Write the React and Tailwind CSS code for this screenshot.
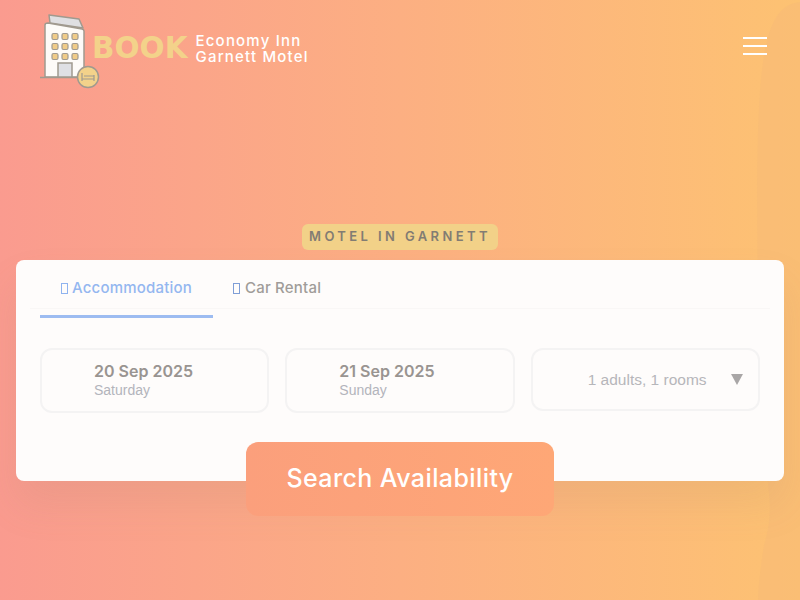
function Logo() {
  return (
    <svg width="62" height="76" viewBox="0 0 62 76" className="shrink-0">
      <path d="M9 1 L39 5 L43 14 L10 9 Z" fill="#dfdfe2" stroke="#a09a8f" strokeWidth="1.500" strokeLinejoin="round" />
      <path d="M5 11 Q5 9 8 9 L42 15 Q44 15.500 44 17 L44 63 L5 63 Z" fill="#fdfbf8" stroke="#a09a8f" strokeWidth="1.500" strokeLinejoin="round" />
      <path d="M0 63.500 H38" stroke="#a09a8f" strokeWidth="1.500" />
      {[19.5, 29.5, 39.5].map((y) =>
        [12, 22, 32].map((x) => (
          <rect key={`${x}-${y}`} x={x} y={y} width="6" height="6" rx="1.500" fill="#efcb88" stroke="#a09a8f" strokeWidth="1.200" />
        ))
      )}
      <rect x="18" y="49" width="14" height="14" fill="#dfe0e4" stroke="#a09a8f" strokeWidth="1.500" />
      <circle cx="48" cy="63" r="10.500" fill="#f3d28a" stroke="#a09a8f" strokeWidth="1.500" />
      <path d="M42 59 V67 M54 61 V67 M42 65 H54 M44 62 H54" stroke="#a09a8f" strokeWidth="1.200" fill="none" />
    </svg>
  );
}

function DateBox({ date, day }) {
  return (
    <div className="h-[65px] border-2 border-[#f4f3f3] rounded-xl pl-[52px] pt-[10px]">
      <div className="font-['Inter',sans-serif] font-semibold text-[16px] leading-[22px] text-[#999491]">{date}</div>
      <div className="font-['Liberation_Sans',sans-serif] text-[14px] leading-[16px] text-[#b3b4bb]">{day}</div>
    </div>
  );
}

export default function App() {
  return (
    <div className="relative h-[600px] w-[800px] overflow-hidden bg-gradient-to-r from-[#fa9b8f] via-[#fcaf82] to-[#fdc272]">
      <svg className="absolute right-0 top-0" width="50" height="600" viewBox="0 0 50 600">
        <path d="M50 2 C30 4 18 20 12 70 C4 130 8 300 10 420 C12 470 28 500 14 545 C10 570 8 590 8 600 H50 Z" fill="#f4b877" opacity="0.35" />
      </svg>

      <div className="relative">
        <header className="flex items-start justify-between h-[224px] pl-[40px] pr-[33px] pt-[14px]">
          <div className="flex items-center h-[76px]">
            <Logo />
            <span className="ml-[-10px] font-['DejaVu_Sans',sans-serif] font-bold text-[29.500px] leading-none text-[#f3d28a] mt-[-6px]">BOOK</span>
            <div className="ml-[8px] mt-[-6px] whitespace-pre-line font-['Inter',sans-serif] font-medium text-[15px] leading-[16px] tracking-[1.200px] text-white">
              {"Economy Inn\nGarnett Motel"}
            </div>
          </div>
          <button className="flex flex-col gap-[6px] mt-[23px] w-[24px]">
            <span className="h-[2px] bg-white" />
            <span className="h-[2px] bg-white" />
            <span className="h-[2px] bg-white" />
          </button>
        </header>

        <div className="flex justify-center">
          <span className="h-[26px] w-[196px] flex items-center justify-center rounded-md bg-[#f2d188] font-['Inter',sans-serif] font-semibold text-[13px] tracking-[3.400px] text-[#827c73]">
            MOTEL IN GARNETT
          </span>
        </div>

        <div className="mt-[10px] mx-[16px] h-[221px] rounded-lg bg-[#fefcfb] pt-[16px] shadow-[0_24px_40px_rgba(150,120,110,0.12)]">
          <div className="mx-[24px] flex h-[42px] relative">
            <span className="absolute left-[-10px] right-[-10px] top-[32px] h-px bg-[#f9f7f6]" />
            <div className="relative w-[173px] h-[42px] border-b-[3px] border-[#9dbcf1] flex items-start pl-[21px] pt-[2px] font-['Inter',sans-serif] font-medium text-[15px] leading-[20px] tracking-[0.2px] text-[#94b7f0]">
              <span className="mt-[5px] mr-[4px] w-[7px] h-[11px] border border-[#8fb3ef]" />
              Accommodation
            </div>
            <div className="relative flex items-start pl-[20px] pt-[2px] font-['Inter',sans-serif] font-medium text-[15px] leading-[20px] tracking-[0.2px] text-[#a09c99]">
              <span className="mt-[5px] mr-[5px] w-[7px] h-[11px] border border-[#7f9ed6]" />
              Car Rental
            </div>
          </div>

          <div className="mt-[30px] mx-[24px] grid grid-cols-3 items-start gap-[16px]">
            <DateBox date="20 Sep 2025" day="Saturday" />
            <DateBox date="21 Sep 2025" day="Sunday" />
            <div className="h-[63px] border-2 border-[#f4f3f3] rounded-xl flex items-center pl-[55px] pr-[15px] justify-between font-['Liberation_Sans',sans-serif] text-[15.500px] text-[#b6b6ba]">
              <span>1 adults, 1 rooms</span>
              <svg width="12" height="11" viewBox="0 0 13 12"><path d="M0 0 H13 L6.500 12 Z" fill="#a9a6a6" /></svg>
            </div>
          </div>

          <div className="mt-[29px] flex justify-center">
            <button className="w-[308px] h-[74px] rounded-xl bg-gradient-to-r from-[#fb9f7c] to-[#fea776] font-['Inter',sans-serif] font-medium text-[25px] tracking-[0.400px] text-white">
              Search Availability
            </button>
          </div>
        </div>
      </div>
    </div>
  );
}
